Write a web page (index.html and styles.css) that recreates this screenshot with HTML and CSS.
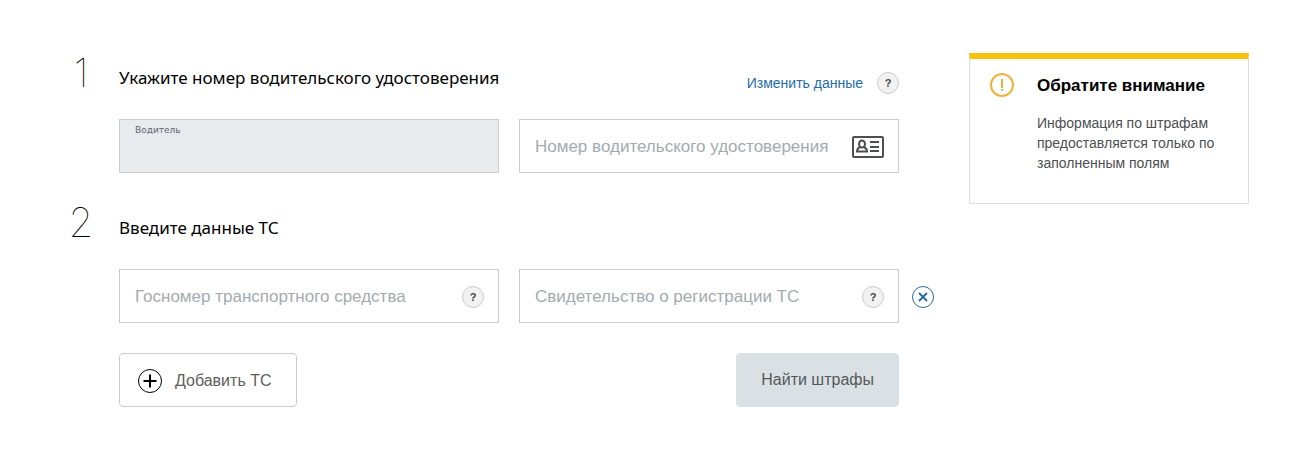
FILE: index.html
```html
<!DOCTYPE html>
<html lang="ru">
<head>
  <meta charset="UTF-8">
  <meta name="viewport" content="width=device-width, initial-scale=1.0">
  <title>Проверка штрафов</title>
  <link rel="stylesheet" href="styles.css">
</head>
<body>

  <div class="page">
    <form class="fines-form">

      <!-- Driver licence -->
      <section class="step">
        <div class="step-number">1</div>
        <div class="step-body">
          <div class="step-header">
            <h2>Укажите номер водительского удостоверения</h2>
            <div class="step-actions">
              <a href="#">Изменить данные</a>
              <button type="button" class="help" aria-label="Подсказка">?</button>
            </div>
          </div>
          <div class="fields">
            <div class="field disabled">
              <label for="driver">Водитель</label>
              <input type="text" id="driver" disabled>
            </div>
            <div class="field">
              <input type="text" id="licence" placeholder="Номер водительского удостоверения" aria-label="Номер водительского удостоверения">
              <svg class="card-icon" width="32" height="22" viewBox="0 0 32 22" fill="none" stroke="#4d4f53" stroke-width="2">
                <rect x="1" y="1" width="30" height="20" rx="1"/>
                <ellipse cx="10" cy="8" rx="3" ry="3.5"/>
                <path d="M8 11C6 12 5 13 5 15.500H15C15 13 14 12 12 11"/>
                <path d="M18 6H27M18 11H27M18 15H27"/>
              </svg>
            </div>
          </div>
        </div>
      </section>

      <!-- Vehicle -->
      <section class="step">
        <div class="step-number">2</div>
        <div class="step-body">
          <div class="step-header">
            <h2>Введите данные ТС</h2>
          </div>
          <div class="fields">
            <div class="field">
              <input type="text" id="plate" placeholder="Госномер транспортного средства" aria-label="Госномер транспортного средства">
              <button type="button" class="help" aria-label="Подсказка">?</button>
            </div>
            <div class="field">
              <input type="text" id="certificate" placeholder="Свидетельство о регистрации ТС" aria-label="Свидетельство о регистрации ТС">
              <button type="button" class="help" aria-label="Подсказка">?</button>
            </div>
            <button type="button" class="remove" aria-label="Удалить ТС">
              <svg width="24" height="24" viewBox="0 0 24 24" fill="none" stroke="#2a6ba5">
                <circle cx="12" cy="12" r="10.5"/>
                <path d="M8 8L16 16M16 8L8 16" stroke-width="2"/>
              </svg>
            </button>
          </div>
          <div class="buttons">
            <button type="button" class="btn btn-add">
              <svg width="26" height="26" viewBox="0 0 26 26" fill="none" stroke="#000">
                <circle cx="13" cy="13" r="11.5"/>
                <path d="M6.5 13H19.5M13 6.5V19.5" stroke-width="2"/>
              </svg>
              Добавить ТС
            </button>
            <button type="submit" class="btn btn-submit">Найти штрафы</button>
          </div>
        </div>
      </section>
    </form>

    <aside class="notice">
      <svg width="24" height="24" viewBox="0 0 24 24" fill="none" stroke="#f0b13c" stroke-width="2">
        <circle cx="12" cy="12" r="11"/>
        <path d="M12 6V15M12 16V18"/>
      </svg>
      <div>
        <h3>Обратите внимание</h3>
        <p>Информация по штрафам предоставляется только по заполненным полям</p>
      </div>
    </aside>
  </div>

</body>
</html>
```
FILE: styles.css
```css
* {
  box-sizing: border-box;
}

body {
  margin: 0;
  background-color: #fff;
  font-family: "Liberation Sans", Arial, sans-serif;
  color: #000;
}

.page {
  display: flex;
  align-items: flex-start;
  gap: 70px;
  padding: 53px 48px 53px 59px;
}

.fines-form {
  flex: 1;
}

.step {
  display: flex;
  gap: 16px;
  margin-bottom: 30px;
}

.step:last-child {
  margin-bottom: 0;
}

.step-number {
  width: 44px;
  font-family: Inter, "Open Sans", sans-serif;
  font-size: 40px;
  font-weight: 100;
  line-height: 40px;
  text-align: center;
}

.step-body {
  flex: 1;
}

.step-header {
  display: flex;
  justify-content: space-between;
  height: 66px;
}

.step-header h2 {
  margin: 0;
  font-family: "Noto Sans", "Open Sans", sans-serif;
  font-size: 17px;
  font-weight: 400;
  line-height: 50px;
}

.step-actions {
  display: flex;
  align-items: center;
  gap: 14px;
  height: 59px;
}

.step-actions a {
  color: #1f6cab;
  font-size: 14px;
  text-decoration: none;
}

.help {
  flex: none;
  width: 22px;
  height: 22px;
  padding: 0;
  border: 1px solid #ccc;
  border-radius: 50%;
  background-color: #f2f2f2;
  color: #444;
  font-family: inherit;
  font-size: 11px;
  font-weight: bold;
  line-height: 20px;
  cursor: pointer;
}

.fields {
  position: relative;
  display: grid;
  grid-template-columns: 1fr 1fr;
  gap: 20px;
}

.field {
  display: flex;
  align-items: center;
  height: 54px;
  padding: 1px 14px 0 15px;
  border: 1px solid #ccc;
}

.field input {
  flex: 1;
  min-width: 0;
  padding: 0;
  border: none;
  outline: none;
  background: none;
  font-family: inherit;
  font-size: 17px;
}

.field input::placeholder {
  color: #a3abb0;
  opacity: 1;
}

.field.disabled {
  flex-direction: column;
  align-items: flex-start;
  padding-top: 4px;
  background-color: #e8ebee;
}

.field label {
  color: #5c6570;
  font-family: "DejaVu Sans", sans-serif;
  font-size: 9px;
  line-height: 12px;
}

.remove {
  position: absolute;
  top: 16px;
  right: -36px;
  width: 24px;
  height: 24px;
  padding: 0;
  border: none;
  background: none;
  cursor: pointer;
}

.buttons {
  display: flex;
  justify-content: space-between;
  margin-top: 30px;
}

.btn {
  display: flex;
  align-items: center;
  height: 54px;
  border: 1px solid #ccc;
  border-radius: 4px;
  background-color: #fff;
  color: #606060;
  font-family: inherit;
  font-size: 16px;
  cursor: pointer;
}

.btn-add {
  gap: 12px;
  padding: 2px 25px 0 17px;
}

.btn-submit {
  padding: 0 24px;
  border-color: #dae1e4;
  background-color: #dae1e4;
  color: #55585a;
}

.notice {
  display: flex;
  gap: 23px;
  width: 280px;
  min-height: 151px;
  padding: 14px 20px;
  border: 1px solid #dcdfe0;
  border-top: 6px solid #fcc10f;
}

.notice svg {
  flex: none;
}

.notice h3 {
  margin: 3px 0 17px;
  font-size: 17px;
  line-height: 20px;
}

.notice p {
  margin: 0;
  color: #4d4f53;
  font-size: 14px;
  line-height: 20px;
}
```
